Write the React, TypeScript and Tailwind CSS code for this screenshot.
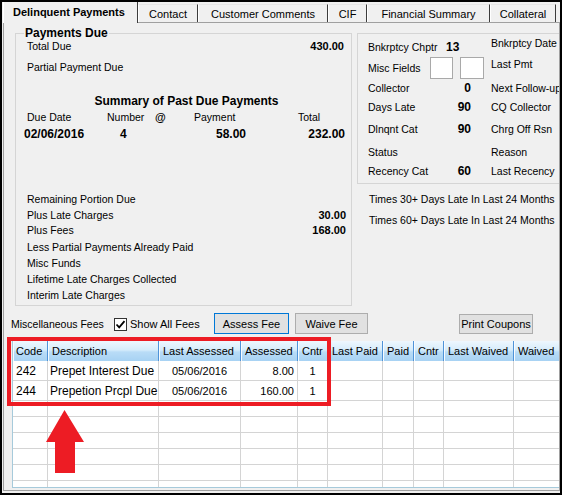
import React from 'react';

const tabs = [
  { label: 'Delinquent Payments', w: 'w-[135px]', active: true },
  { label: 'Contact', w: 'w-[60px]' },
  { label: 'Customer Comments', w: 'w-[130px]' },
  { label: 'CIF', w: 'w-[39px]' },
  { label: 'Financial Summary', w: 'w-[123px]' },
  { label: 'Collateral', w: 'w-[66px]' },
];

const columns = [
  'Code',
  'Description',
  'Last Assessed',
  'Assessed',
  'Cntr',
  'Last Paid',
  'Paid',
  'Cntr',
  'Last Waived',
  'Waived',
];

const fees = [
  { code: '242', desc: 'Prepet Interest Due', date: '05/06/2016', amt: '8.00', cntr: '1' },
  { code: '244', desc: 'Prepetion Prcpl Due', date: '05/06/2016', amt: '160.00', cntr: '1' },
];

const gridCols =
  'grid grid-cols-[35px_111px_82px_57px_30px_55px_31px_30px_70px_47px]';

function Row({ label, value, className = '' }: { label: string; value?: string; className?: string }) {
  return (
    <div className={`flex h-[14px] justify-between whitespace-nowrap ${className}`}>
      <span>{label}</span>
      {value && <span className="font-bold text-[11px]">{value}</span>}
    </div>
  );
}

function EmptyCells({ h }: { h: string }) {
  return (
    <>
      {columns.map((_, i) => (
        <div key={i} className={`${h} border-r border-b border-[#d4d4d4] bg-white`} />
      ))}
    </>
  );
}

export default function App() {
  return (
    <div className="relative w-[562px] h-[495px] overflow-hidden border-2 border-black bg-[#f0f0f0] font-['Liberation_Sans',Arial,sans-serif] text-[11px] leading-[14px] text-black">
      {/* tab strip */}
      <div className="flex h-[20px] items-end pl-[1px]">
        {tabs.map((t) =>
          t.active ? (
            <div
              key={t.label}
              className={`${t.w} relative z-10 -mb-px h-[21px] border-l border-r border-l-white border-r-[#3c3c3c] bg-[#f0f0f0] pl-[9px] pt-[3px] font-bold whitespace-nowrap`}
            >
              {t.label}
            </div>
          ) : (
            <div
              key={t.label}
              className={`${t.w} h-[18px] border-l border-r border-t border-l-white border-t-[#e6e6e6] border-r-[#3c3c3c] bg-[#f0f0f0] pt-[2px] text-center whitespace-nowrap`}
            >
              {t.label}
            </div>
          )
        )}
      </div>

      {/* tab page */}
      <div className="ml-[1px] w-[557px] h-[469px] overflow-hidden border border-[#a0a0a0] text-[10.5px]">
        <div className="flex items-start pl-[11px] pt-[4px]">
          <fieldset className="w-[337px] h-[279px] shrink-0 border border-[#d5d5d5]">
            <legend className="ml-[8px] px-[1px] text-[12px] font-bold leading-[12px]">Payments Due</legend>
            <div className="pl-[11px] pr-[5px]">
              <Row label="Total Due" value="430.00" className="pr-[2px]" />
              <Row label="Partial Payment Due" className="mt-[7px]" />
              <div className="mt-[20px] h-[14px] text-center text-[12px] font-bold">Summary of Past Due Payments</div>
              <div className="mt-[2px] flex h-[14px] whitespace-nowrap">
                <span className="w-[80px]">Due Date</span>
                <span className="w-[48px]">Number</span>
                <span className="w-[39px] font-bold text-[11px]">@</span>
                <span className="w-[104px]">Payment</span>
                <span>Total</span>
              </div>
              <div className="-ml-[3px] mt-[3px] flex h-[14px] font-bold text-[12px] whitespace-nowrap">
                <span className="w-[96px]">02/06/2016</span>
                <span className="w-[10px]">4</span>
                <span className="w-[116px] text-right">58.00</span>
                <span className="w-[99px] text-right">232.00</span>
              </div>
              <Row label="Remaining Portion Due" className="mt-[51px]" />
              <Row label="Plus Late Charges" value="30.00" className="mt-[2px]" />
              <Row label="Plus Fees" value="168.00" className="mt-px" />
              <Row label="Less Partial Payments Already Paid" className="mt-[3px]" />
              <Row label="Misc Funds" className="mt-[2px]" />
              <Row label="Lifetime Late Charges Collected" className="mt-[2px]" />
              <Row label="Interim Late Charges" className="mt-[2px]" />
            </div>
          </fieldset>

          <div className="ml-[5px] mt-[6px] flex flex-col">
            <fieldset className="w-[240px] h-[151px] border border-[#d5d5d5]">
              <div className="pl-[10px] pt-[2px] whitespace-nowrap">
                <div className="flex h-[21px] items-start">
                  <span className="mt-[4px] w-[78px]">Bnkrptcy Chptr</span>
                  <span className="mt-[4px] w-[45px] font-bold text-[12px]">13</span>
                  <span>Bnkrptcy Date</span>
                </div>
                <div className="flex h-[24px] items-start">
                  <span className="mt-[4px] w-[62px]">Misc Fields</span>
                  <span className="h-[22px] w-[23px] border border-[#a9a9a9] bg-white" />
                  <span className="ml-[7px] h-[22px] w-[24px] border border-[#a9a9a9] bg-white" />
                  <span className="ml-[7px]">Last Pmt</span>
                </div>
                <div className="flex h-[19px] items-start">
                  <span className="w-[78px]">Collector</span>
                  <span className="w-[25px] text-right font-bold text-[12px]">0</span>
                  <span className="ml-[20px]">Next Follow-up</span>
                </div>
                <div className="flex h-[22px] items-start">
                  <span className="w-[78px]">Days Late</span>
                  <span className="w-[25px] text-right font-bold text-[12px]">90</span>
                  <span className="ml-[20px]">CQ Collector</span>
                </div>
                <div className="flex h-[23px] items-start">
                  <span className="w-[78px]">Dlnqnt Cat</span>
                  <span className="w-[25px] text-right font-bold text-[12px]">90</span>
                  <span className="ml-[20px]">Chrg Off Rsn</span>
                </div>
                <div className="flex h-[19px] items-start">
                  <span className="w-[78px]">Status</span>
                  <span className="w-[25px]" />
                  <span className="ml-[20px]">Reason</span>
                </div>
                <div className="flex h-[14px] items-start">
                  <span className="w-[78px]">Recency Cat</span>
                  <span className="w-[25px] text-right font-bold text-[12px]">60</span>
                  <span className="ml-[20px]">Last Recency</span>
                </div>
              </div>
            </fieldset>
            <div className="mt-[8px] h-[14px] pl-[12px] whitespace-nowrap">Times 30+ Days Late In Last 24 Months</div>
            <div className="mt-[7px] h-[14px] pl-[12px] whitespace-nowrap">Times 60+ Days Late In Last 24 Months</div>
          </div>
        </div>

        {/* misc fees bar */}
        <div className="mt-[7px] flex h-[21px] items-start pl-[7px] whitespace-nowrap">
          <span className="mt-[4px] w-[103px]">Miscellaneous Fees</span>
          <span className="mt-[5px] flex h-[13px] w-[13px] items-center justify-center border border-[#333] bg-white">
            <svg width="11" height="11" viewBox="0 0 11 11">
              <path d="M1.5 5.5 L4.2 8.3 L9.5 2.2" fill="none" stroke="#000" strokeWidth="1.8" />
            </svg>
          </span>
          <span className="mt-[4px] ml-[3px] w-[84px] text-[11px]">Show All Fees</span>
          <button className="h-[21px] w-[75px] border border-[#0078d7] bg-[#e1e1e1] text-center text-[11px]">Assess Fee</button>
          <button className="ml-[6px] h-[21px] w-[73px] border border-[#adadad] bg-[#e1e1e1] text-center text-[11px]">Waive Fee</button>
          <button className="ml-[91px] mt-px h-[20px] w-[74px] border border-[#adadad] bg-[#e1e1e1] text-center text-[11px]">Print Coupons</button>
        </div>

        {/* fees grid */}
        <div className="ml-[8px] mt-[7px] w-[560px] h-[147px] overflow-hidden border-l border-b border-[#a6cadb] bg-white text-[11px]">
          <div className={gridCols}>
            {columns.map((c, i) => (
              <div
                key={i}
                className={`h-[20px] border-r border-[#4f93d8] bg-[linear-gradient(to_bottom,#eef7fe_0%,#d6ecfb_45%,#b9dcf7_55%,#a7d2f3_100%)] shadow-[inset_1px_0_0_#f7fbff] pt-[3px] whitespace-nowrap ${i === 0 ? 'pl-[3px]' : 'pl-[4px]'}`}
              >
                {c}
              </div>
            ))}
            {fees.map((f) => (
              <React.Fragment key={f.code}>
                <div className="h-[20px] border-r border-b border-[#d4d4d4] pl-[3px] pt-[3px] text-[12px]">{f.code}</div>
                <div className="h-[20px] border-r border-b border-[#d4d4d4] pl-[2px] pt-[3px] text-[12px] whitespace-nowrap">{f.desc}</div>
                <div className="h-[20px] border-r border-b border-[#d4d4d4] pt-[3px] text-center">{f.date}</div>
                <div className="h-[20px] border-r border-b border-[#d4d4d4] pr-[3px] pt-[3px] text-right">{f.amt}</div>
                <div className="h-[20px] border-r border-b border-[#d4d4d4] pt-[3px] text-center">{f.cntr}</div>
                <div className="h-[20px] border-r border-b border-[#d4d4d4]" />
                <div className="h-[20px] border-r border-b border-[#d4d4d4]" />
                <div className="h-[20px] border-r border-b border-[#d4d4d4]" />
                <div className="h-[20px] border-r border-b border-[#d4d4d4]" />
                <div className="h-[20px] border-r border-b border-[#d4d4d4]" />
              </React.Fragment>
            ))}
            <EmptyCells h="h-[16px]" />
            <EmptyCells h="h-[16px]" />
            <EmptyCells h="h-[16px]" />
            <EmptyCells h="h-[16px]" />
            <EmptyCells h="h-[16px]" />
            <EmptyCells h="h-[16px]" />
          </div>
        </div>
      </div>

      {/* annotation: red highlight box and arrow */}
      <div className="absolute left-[5px] top-[335px] h-[69px] w-[324px] border-4 border-[#ed1c24]" />
      <svg className="absolute left-[42px] top-[406px]" width="42" height="68" viewBox="0 0 42 68">
        <path d="M20.5 2 L40 34 L31 34 L31 65 L11 65 L11 34 L2 34 Z" fill="#ed1c24" />
      </svg>
    </div>
  );
}
